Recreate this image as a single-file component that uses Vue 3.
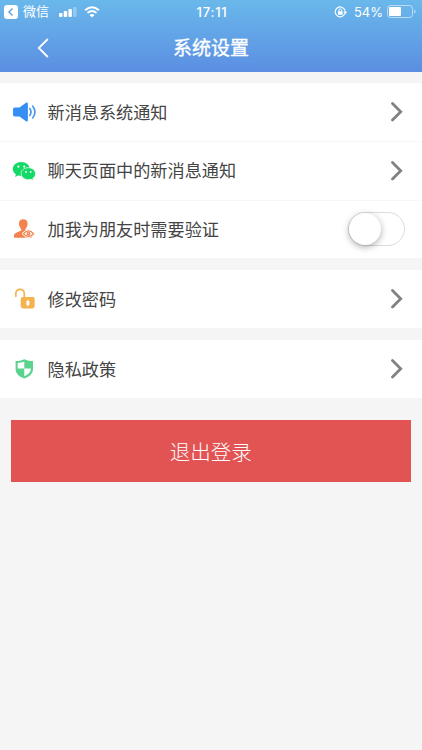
<script setup>
import { ref } from 'vue'

const verifyFriends = ref(false)

const groups = [
  [
    { icon: 'sound', label: '新消息系统通知' },
    { icon: 'chat', label: '聊天页面中的新消息通知' },
    { icon: 'friend', label: '加我为朋友时需要验证', toggle: true },
  ],
  [{ icon: 'lock', label: '修改密码' }],
  [{ icon: 'shield', label: '隐私政策' }],
]
</script>

<template>
  <div class="screen">
    <header class="header">
      <div class="status">
        <div class="status-left">
          <svg class="back-app" viewBox="0 0 14 14">
            <rect width="14" height="14" rx="3" fill="#fff" />
            <path d="M8.500 3.400 5 7l3.500 3.600" fill="none" stroke="#5ba3e3" stroke-width="1.400" />
          </svg>
          <span class="app-name">微信</span>
          <svg class="signal" viewBox="0 0 18 10">
            <rect x="0" y="6" width="3.500" height="4" rx="1" />
            <rect x="4.700" y="4" width="3.500" height="6" rx="1" />
            <rect x="9.400" y="2" width="3.500" height="8" rx="1" />
            <rect x="14.100" y="0" width="3.500" height="10" rx="1" opacity=".3" />
          </svg>
          <svg class="wifi" viewBox="0 0 16 12">
            <path d="M1.100 4.300Q8-1.900 14.900 4.300" />
            <path d="M3.500 6.900Q8 3 12.500 6.900" />
            <path class="dot" d="M5.500 9Q8 6.900 10.500 9L8 11.500Z" />
          </svg>
        </div>
        <span class="time">17:11</span>
        <div class="status-right">
          <svg class="rotation" viewBox="0 0 14 12">
            <path d="M10.800 7.800a5 5 0 1 1 .2-3.300M11 4.500v1.800" fill="none" stroke="#fff" stroke-width="1.100" />
            <path d="M9.300 5.700h4l-2 2.600Z" fill="#fff" />
            <rect x="3.900" y="5.200" width="4.800" height="3.600" rx=".5" fill="#fff" />
            <path d="M4.900 5.500V4.300a1.400 1.400 0 0 1 2.800 0v1.200" fill="none" stroke="#fff" />
          </svg>
          <span class="percent">54%</span>
          <svg class="battery" viewBox="0 0 29 13">
            <rect x=".5" y=".5" width="25" height="12" rx="3" fill="none" stroke="#fff" opacity=".55" />
            <rect x="2" y="2" width="12" height="9" rx="1" fill="#fff" />
            <path d="M27.200 4.500q1.400.6 1.400 2t-1.400 2Z" fill="#fff" opacity=".55" />
          </svg>
        </div>
      </div>
      <div class="nav">
        <svg class="back" viewBox="0 0 12 20">
          <path d="M10.800 1 1.800 10l9 9" fill="none" stroke="#fff" stroke-width="1.800" />
        </svg>
        <h1>系统设置</h1>
      </div>
    </header>

    <main>
      <section v-for="(group, i) in groups" :key="i" class="group">
        <div v-for="row in group" :key="row.icon" class="row">
          <svg class="icon" viewBox="0 0 24 24">
            <g v-if="row.icon === 'sound'">
              <path d="M2.800 7.600h4.700l6.500-4.800q1.900-.9 1.900 1v16.400q0 1.900-1.900 1l-6.500-4.600H2.800q-1.800 0-1.800-1.800V9.400q0-1.800 1.800-1.800Z" fill="#348ff2" />
              <path d="M17.800 8.500q2.400 3.500 0 7M20.800 6.200q4.300 5.800 0 11.600" fill="none" stroke="#4a9af0" stroke-width="1.700" stroke-linecap="round" />
            </g>
            <g v-else-if="row.icon === 'chat'" fill="#13d966">
              <path d="M9.300 2.900C4.600 2.900.8 6 .8 9.900c0 2.200 1.200 4.100 3.100 5.400l-.8 2.600 3-1.500c1 .3 2.100.5 3.200.5 4.700 0 8.500-3.100 8.500-7s-3.800-7-8.500-7Z" />
              <path d="M16.300 8.700c-4 0-7.200 2.700-7.200 6s3.200 6 7.200 6c.9 0 1.800-.1 2.600-.4l2.600 1.300-.7-2.200c1.700-1.100 2.700-2.800 2.700-4.700 0-3.300-3.200-6-7.200-6Z" stroke="#fff" stroke-width=".7" />
              <g fill="#fff">
                <circle cx="6.400" cy="7.600" r="1.100" /><circle cx="12.200" cy="7.600" r="1.100" />
                <circle cx="14" cy="12.900" r=".9" /><circle cx="18.700" cy="12.900" r=".9" />
              </g>
            </g>
            <g v-else-if="row.icon === 'friend'">
              <path d="M11.300 2.300c-3 0-4.500 2-4.300 4.800.1 2.200 1 3.700 2.200 4.900v1.400l-5.500 2.500Q2 16.800 2 18.700v2h18v-4l-6.600-3.300V12c1.200-1.200 2.100-2.700 2.200-4.900.2-2.800-1.300-4.800-4.300-4.800Z" fill="#f4824f" />
              <path d="M10 16.700Q16.500 8.800 23 16.700 16.500 24.600 10 16.700Z" fill="#f4824f" stroke="#fff" stroke-width="1" />
              <path d="M12.200 16.700Q16.500 12.400 20.800 16.700 16.500 21 12.200 16.700Z" fill="#fff" />
              <circle cx="16.500" cy="16.700" r="1.900" fill="#f4824f" />
              <circle cx="16.500" cy="16.300" r=".5" fill="#fff" />
            </g>
            <g v-else-if="row.icon === 'lock'">
              <path d="M3.800 9.300V7q0-4.600 4.300-4.600T12.300 7v4.200" fill="none" stroke="#f4b34e" stroke-width="1.700" stroke-linecap="round" />
              <path d="M10.500 10h10.300q1.900 0 1.900 1.900v6.300q0 3.400-3.400 3.400h-7.200q-3.400 0-3.400-3.400v-6.300q0-1.900 1.800-1.900Z" fill="#f4b34e" />
              <path d="M14.400 14.800a1.500 1.500 0 0 1 3 0v2.400a1.500 1.500 0 0 1-3 0Z" fill="#fff" />
            </g>
            <g v-else>
              <path d="M12.300 2.200q4.500 2 8.700 1.900v8.400q0 5.700-8.700 9.100-8.700-3.400-8.700-9.100V4.100Q7.800 4.200 12.300 2.200Z" fill="#5bd28d" />
              <path d="M12.300 4.700v6.900H5.700V5.900Q9.300 5.800 12.300 4.700ZM12.300 11.600h6.600q.1 4.800-6.600 7.700Z" fill="#fff" />
            </g>
          </svg>
          <span class="label">{{ row.label }}</span>
          <button
            v-if="row.toggle"
            class="switch"
            :class="{ on: verifyFriends }"
            role="switch"
            :aria-checked="verifyFriends"
            @click="verifyFriends = !verifyFriends"
          >
            <span class="knob"></span>
          </button>
          <svg v-else class="arrow" viewBox="0 0 12 20">
            <path d="m1.500 1.500 8.200 8.200-8.200 8.200" fill="none" stroke="#828282" stroke-width="2.800" stroke-linecap="round" />
          </svg>
        </div>
      </section>
      <button class="logout">退出登录</button>
    </main>
  </div>
</template>

<style>
body {
  margin: 0;
  background: #f5f5f5;
}
</style>

<style scoped>
.screen {
  box-sizing: border-box;
  height: 750px;
  overflow: hidden;
  background: #f5f5f5;
  font-family: "Liberation Sans", "Noto Sans CJK SC", sans-serif;
}
button {
  border: 0;
  padding: 0;
  font-family: inherit;
}
svg {
  display: block;
  flex: none;
}
.header {
  height: 72px;
  background: linear-gradient(#6ab8eb, #5b8ee2);
  color: #fff;
}
.status {
  display: grid;
  grid-template-columns: 1fr auto 1fr;
  align-items: center;
  height: 24px;
  padding: 0 6px 0 4px;
}
.status-left,
.status-right {
  display: flex;
  align-items: center;
}
.status-right {
  justify-content: flex-end;
}
.back-app {
  width: 14px;
  height: 14px;
}
.app-name {
  margin-left: 5px;
  font-size: 13px;
  line-height: 24px;
}
.signal {
  width: 18px;
  height: 10px;
  margin-left: 10px;
  fill: #fff;
}
.wifi {
  width: 16px;
  height: 12px;
  margin-left: 7px;
  fill: none;
  stroke: #fff;
  stroke-width: 1.9;
}
.wifi .dot {
  fill: #fff;
  stroke: none;
}
.time {
  padding-left: 4px;
  font: 500 13px/24px Inter, sans-serif;
  letter-spacing: 0.8px;
}
.rotation {
  width: 14px;
  height: 12px;
}
.percent {
  margin-left: 6px;
  font: 13px/24px Inter, sans-serif;
}
.battery {
  width: 29px;
  height: 13px;
  margin: -1px 0 0 4px;
}
.nav {
  display: grid;
  grid-template-columns: 1fr auto 1fr;
  align-items: center;
  height: 47px;
}
.back {
  width: 12px;
  height: 20px;
  margin-left: 37px;
}
h1 {
  margin: 0;
  padding-top: 1px;
  font-size: 19px;
  font-weight: 400;
  line-height: 47px;
  -webkit-text-stroke: 0.35px #fff;
}
main {
  padding-top: 11px;
}
.group {
  margin-bottom: 12px;
  background: #fff;
}
.row {
  display: flex;
  align-items: center;
  box-sizing: border-box;
  height: 58px;
  padding: 0 18px 0 12px;
}
.row + .row {
  height: 58.5px;
  border-top: 1px solid #f7f7f7;
}
.icon {
  width: 24px;
  height: 24px;
}
.label {
  flex: 1;
  margin-left: 11.5px;
  padding-top: 1px;
  color: #444;
  font-size: 17.15px;
  line-height: 26px;
}
.arrow {
  width: 12px;
  height: 20px;
  margin-right: 1px;
}
.switch {
  box-sizing: border-box;
  width: 57px;
  height: 34px;
  margin: 0 -1px 1px 0;
  border: 1.5px solid #dcdcdc;
  border-radius: 17px;
  background: #fff;
}
.knob {
  display: block;
  width: 32px;
  height: 32px;
  border-radius: 50%;
  background: #fff;
  box-shadow: 0 2px 7px rgba(0, 0, 0, 0.32);
}
.switch.on {
  border-color: #5b8ee2;
  background: #5b8ee2;
}
.switch.on .knob {
  margin-left: auto;
}
.logout {
  display: block;
  width: calc(100% - 22.5px);
  height: 62px;
  margin: 22px 11px 0;
  padding-bottom: 1px;
  background: #e25453;
  color: #fff;
  font-size: 20.5px;
  font-weight: 300;
}
</style>
